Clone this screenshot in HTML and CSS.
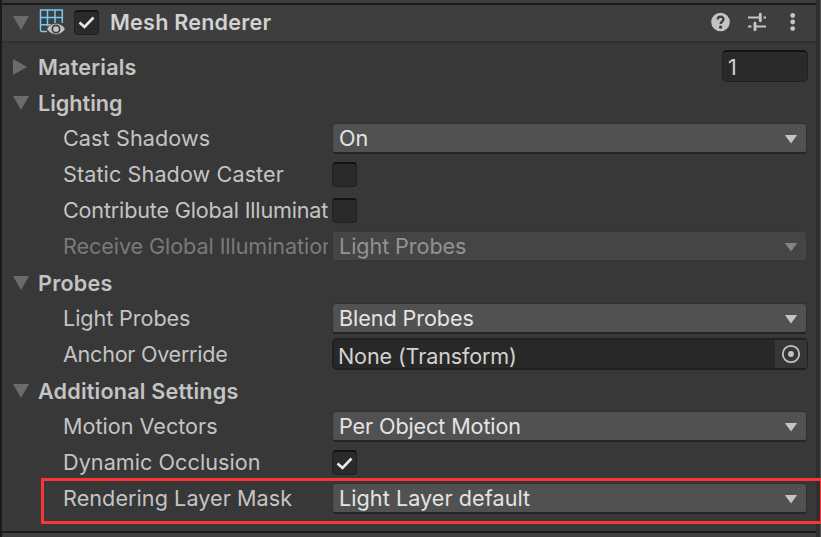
FILE: index.html
```html
<!DOCTYPE html>
<html lang="en">
<head>
<meta charset="utf-8">
<title>Mesh Renderer</title>
<link rel="stylesheet" href="styles.css">
</head>
<body>
<main class="inspector">
  <header class="header">
    <svg class="fold" width="16" height="14" viewBox="0 0 16 14"><path d="M0 0H16L8 14Z"/></svg>
    <svg class="mesh" width="27" height="26" viewBox="0 0 27 26">
      <path d="M8 22.600H3.200a1.700 1.700 0 0 1-1.700-1.700V1.100h21.800V14M1 8.500h22M1 15.800h11M8.500 1v16M16 1v13" fill="none" stroke="#76c9f3" stroke-width="1.500"/>
      <path d="M7.800 20C12 12.600 22 12.600 26.200 20C22 27.200 12 27.200 7.800 20Z" fill="#c4c4c4" stroke="#3e3e3e" stroke-width=".5"/>
      <circle cx="17" cy="20" r="3.700" fill="#c4c4c4" stroke="#3e3e3e" stroke-width="1.700"/>
    </svg>
    <span class="check"><svg width="19" height="17" viewBox="0 0 19 17"><path d="M2.500 8.500l5 4.500L16.500 3.500"/></svg></span>
    <h1 class="title">Mesh Renderer</h1>
    <svg class="tools" width="90" height="22" viewBox="0 0 90 22">
      <circle cx="9.500" cy="11" r="9.300" fill="#c4c4c4"/>
      <path d="M6.700 8.500C6.700 4.700 12.500 4.700 12.500 8.300C12.500 10.500 9.600 10.500 9.600 13" fill="none" stroke="#3e3e3e" stroke-width="2.300"/>
      <circle cx="9.600" cy="16.200" r="1.600" fill="#3e3e3e"/>
      <path d="M37 6.500H50M52.500 6.500H55M37 15.500H40.500M43 15.500H55" fill="none" stroke="#c4c4c4" stroke-width="1.800"/>
      <path d="M49.300 3.300V9.800M44 12.200V18.700" fill="none" stroke="#c4c4c4" stroke-width="2.900" stroke-linecap="round"/>
      <g fill="#c4c4c4"><circle cx="81.700" cy="4.500" r="2.400"/><circle cx="81.700" cy="11" r="2.400"/><circle cx="81.700" cy="17.600" r="2.400"/></g>
    </svg>
  </header>
  <section class="body">
    <div class="row group">
      <svg class="fold side" width="14" height="16" viewBox="0 0 14 16"><path d="M0 0V16L14 8Z"/></svg>
      <h2>Materials</h2><span class="number">1</span>
    </div>
    <div class="row group">
      <svg class="fold" width="16" height="14" viewBox="0 0 16 14"><path d="M0 0H16L8 14Z"/></svg>
      <h2 class="lighting">Lighting</h2>
    </div>
    <div class="row"><span class="label cast">Cast Shadows</span><span class="select">On<i class="arrow"></i></span></div>
    <div class="row"><span class="label caster">Static Shadow Caster</span><span class="check"></span></div>
    <div class="row"><span class="label contribute">Contribute Global Illumination</span><span class="check"></span></div>
    <div class="row disabled"><span class="label">Receive Global Illumination</span><span class="select">Light Probes<i class="arrow"></i></span></div>
    <div class="row group">
      <svg class="fold" width="16" height="14" viewBox="0 0 16 14"><path d="M0 0H16L8 14Z"/></svg>
      <h2>Probes</h2>
    </div>
    <div class="row"><span class="label">Light Probes</span><span class="select">Blend Probes<i class="arrow"></i></span></div>
    <div class="row"><span class="label anchor">Anchor Override</span><span class="object"><span class="value">None (Transform)</span><span class="picker"><svg width="20" height="20" viewBox="0 0 20 20"><circle cx="10" cy="10" r="8.200" fill="none" stroke="#c4c4c4" stroke-width="1.800"/><circle cx="10" cy="10" r="2.900" fill="#c4c4c4"/></svg></span></span></div>
    <div class="row group">
      <svg class="fold" width="16" height="14" viewBox="0 0 16 14"><path d="M0 0H16L8 14Z"/></svg>
      <h2>Additional Settings</h2>
    </div>
    <div class="row"><span class="label motion">Motion Vectors</span><span class="select object-motion">Per Object Motion<i class="arrow"></i></span></div>
    <div class="row"><span class="label occlusion">Dynamic Occlusion</span><span class="check"><svg width="19" height="17" viewBox="0 0 19 17"><path d="M2.500 8.500l5 4.500L16.500 3.500"/></svg></span></div>
    <div class="row marked"><span class="label mask">Rendering Layer Mask</span><span class="select layer">Light Layer default<i class="arrow"></i></span></div>
  </section>
</main>
</body>
</html>
```
FILE: styles.css
```css
*, *::after { box-sizing: border-box; }
body {
  margin: 0;
  height: 537px;
  overflow: hidden;
  background: #3e3e3e;
  color: #c4c4c4;
  font: 21.6px/28px Inter, sans-serif;
  letter-spacing: -0.08px;
}
.inspector {
  height: 537px;
  padding-top: 3px;
  border-left: 2px solid #1a1a1a;
  border-right: 1px solid #555;
  box-shadow: inset -4px 0 #2f2f2f;
}
.header {
  display: flex;
  align-items: center;
  height: 40px;
  margin-right: 4px;
  padding: 0 0 2px 11px;
  border-top: 2px solid #1a1a1a;
  border-bottom: 2px solid #303030;
  background: #3e3e3e;
}
.fold { flex: none; fill: #6b6b6b; }
.header .fold { margin-top: 2px; }
.mesh { margin: 0 8px 0 10px; }
.title, h2 { margin: 0; font-size: 21.6px; font-weight: 600; letter-spacing: 0.2px; white-space: nowrap; }
.title { margin-left: 11px; color: #d2d2d2; }
.lighting { letter-spacing: 0; }
.tools { margin: 0 15px 0 auto; }
.body {
  height: 490px;
  margin-right: 4px;
  padding-top: 6px;
  border-bottom: 2px solid #1a1a1a;
  background: #383838;
}
.row {
  position: relative;
  display: flex;
  align-items: center;
  height: 36px;
  padding: 0 9px 1px 61px;
  white-space: nowrap;
}
.group { padding: 0 8px 0 11px; }
.group h2 { margin-left: 9px; }
.side { margin-right: 2px; }
.label { flex: none; width: 265px; margin-right: 4px; padding-bottom: 2px; overflow: hidden; }
.cast { letter-spacing: 0.1px; }
.caster { letter-spacing: 0.1px; }
.contribute { letter-spacing: -0.18px; }
.anchor { letter-spacing: -0.28px; }
.motion { letter-spacing: 0; }
.mask { letter-spacing: 0.06px; }
.occlusion { letter-spacing: 0.05px; }
.check {
  display: flex;
  align-items: center;
  justify-content: center;
  flex: none;
  width: 25px;
  height: 25px;
  border: 1px solid #202020;
  border-top: 2px solid #121212;
  border-radius: 4px;
  background: #2a2a2a;
}
.check path { fill: none; stroke: #e8e8e8; stroke-width: 2.6; }
.select {
  display: flex;
  align-items: center;
  flex: 1;
  height: 31px;
  padding: 0 8.500px 0 6px;
  border: 1px solid #303030;
  border-bottom: 2px solid #242424;
  border-radius: 4px;
  background: #515151;
  color: #e4e4e4;
}
.object-motion { letter-spacing: -0.12px; }
.layer { letter-spacing: 0.06px; }
.arrow {
  width: 13px;
  height: 9px;
  margin: 2px 0 0 auto;
  background: #c4c4c4;
  clip-path: polygon(0 0, 100% 0, 50% 100%);
}
.disabled { color: #7a7a7a; }
.disabled .select { border-color: #363636; background: #454545; color: #929292; }
.disabled .arrow { background: #848484; }
.number {
  width: 86px;
  height: 32px;
  margin: -2px 0 0 auto;
  padding: 1px 0 0 5px;
  border: 1px solid #202020;
  border-top: 2px solid #121212;
  border-radius: 5px;
  background: #2a2a2a;
  color: #d2d2d2;
}
.object {
  display: flex;
  flex: 1;
  height: 32px;
  margin: -1px -1px 0 0;
  border: 2px solid #202020;
  border-right-width: 1px;
  border-radius: 5px;
  background: #282828;
  color: #d2d2d2;
}
.value { flex: 1; padding: 2px 0 0 4px; line-height: 26px; height: 28px; padding-top: 3px; letter-spacing: -0.15px; }
.picker {
  display: flex;
  align-items: center;
  justify-content: center;
  width: 32px;
  background: #363636;
}
.marked::after {
  content: "";
  position: absolute;
  left: 39px;
  top: -3px;
  width: 780px;
  height: 46px;
  border: 3px solid #f93535;
  border-right-width: 1px;
}
```
